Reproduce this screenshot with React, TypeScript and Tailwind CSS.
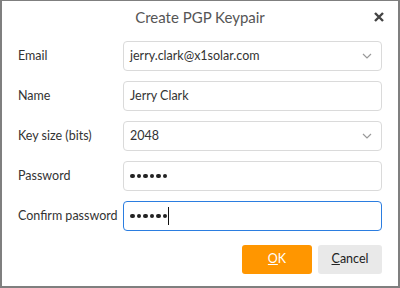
const font = { fontFamily: 'Lato, "Noto Sans", sans-serif' };

const Chevron = () => (
  <svg width="10" height="6" viewBox="0 0 10 6" className="text-[#9a9a9a]">
    <path d="M1 1l4 4 4-4" fill="none" stroke="currentColor" strokeWidth="1.2" />
  </svg>
);

const Field = ({
  label,
  children,
  select,
  focused,
}: {
  label: string;
  children: React.ReactNode;
  select?: boolean;
  focused?: boolean;
}) => (
  <div className="flex items-center h-[30px]">
    <div className="w-[105px] whitespace-nowrap text-[12.5px] text-[#333]">{label}</div>
    <div
      className={`flex-1 h-[30px] rounded-[4px] bg-white flex items-center pl-[6px] pr-[9px] text-[12.5px] text-[#333] border ${
        focused ? "border-[#2b7de0]" : "border-[#dadada]"
      }`}
    >
      <div className="flex-1 flex items-center">{children}</div>
      {select && <Chevron />}
    </div>
  </div>
);

const Dots = () => (
  <span className="flex gap-[2px]">
    {[0, 1, 2, 3, 4, 5].map((i) => (
      <span key={i} className="w-[4.5px] h-[4.5px] rounded-full bg-[#222]" />
    ))}
  </span>
);

export default function App() {
  return (
    <div
      style={font}
      className="w-[400px] h-[288px] bg-white border-x-2 border-b-2 border-t border-[#7f7f7f] flex flex-col"
    >
      <div className="h-[32px] flex items-center justify-center relative">
        <span className="text-[15px] text-[#555]">Create PGP Keypair</span>
        <svg
          width="10"
          height="10"
          viewBox="0 0 10 10"
          className="absolute right-[14px] top-[11px]"
        >
          <path d="M1 1l8 8M9 1l-8 8" stroke="#444" strokeWidth="2.4" />
        </svg>
      </div>
      <div className="flex flex-col gap-[10px] px-4 pt-[8px]">
        <Field label="Email" select>
          jerry.clark@x1solar.com
        </Field>
        <Field label="Name">Jerry Clark</Field>
        <Field label="Key size (bits)" select>
          2048
        </Field>
        <Field label="Password">
          <Dots />
        </Field>
        <Field label="Confirm password" focused>
          <Dots />
          <span className="w-px h-[18px] bg-[#111] ml-[1px]" />
        </Field>
      </div>
      <div className="flex justify-end gap-[6px] px-4 pt-[14px]">
        <button className="w-[70px] h-[29px] rounded-[3px] bg-[#ff9600] text-white text-[12.5px]">
          <span className="underline">O</span>K
        </button>
        <button className="w-[64px] h-[29px] rounded-[3px] bg-[#e9e9e9] text-[#222] text-[12.5px]">
          <span className="underline">C</span>ancel
        </button>
      </div>
    </div>
  );
}
